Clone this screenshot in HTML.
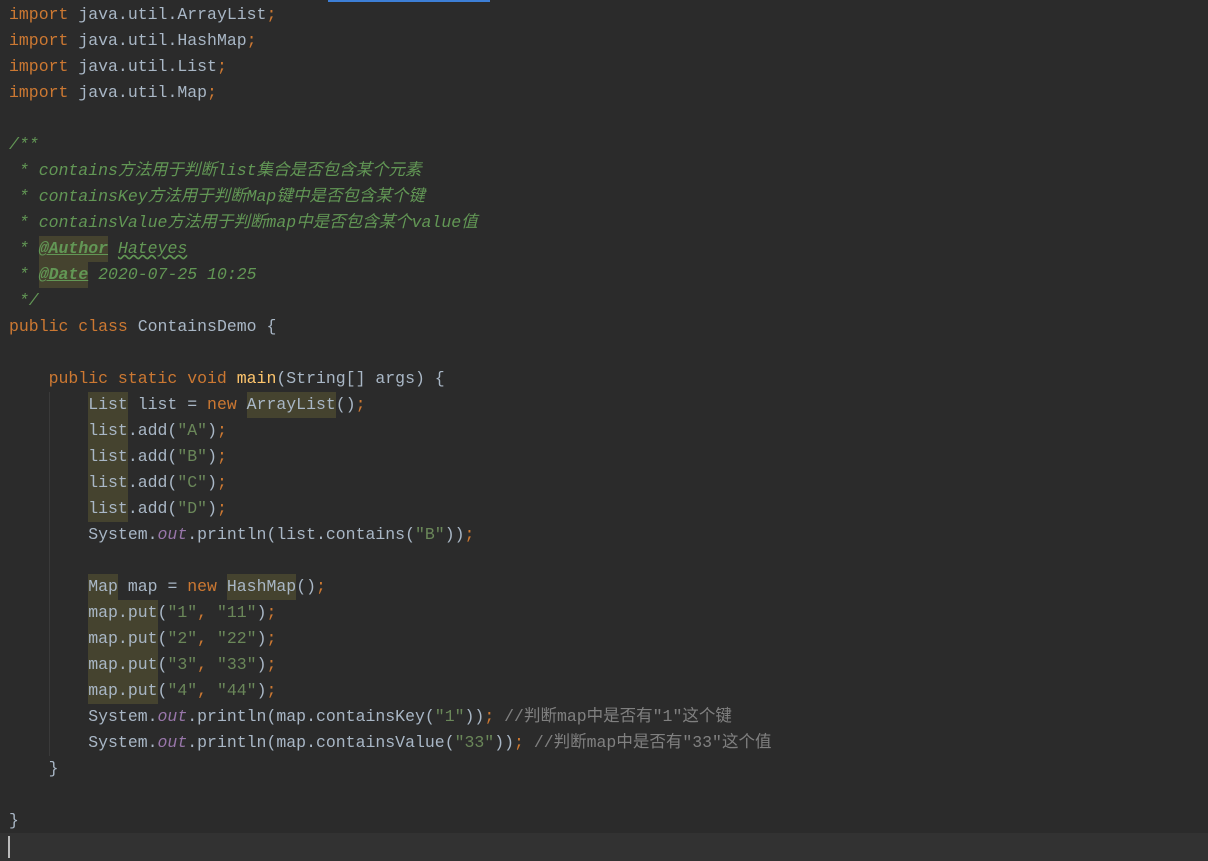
<!DOCTYPE html>
<html><head><meta charset="utf-8"><style>
body{margin:0;width:1208px;height:861px;background:#2b2b2b;overflow:hidden;position:relative;font-family:"Liberation Mono","Noto Sans CJK SC",monospace;font-size:16.5px;color:#a9b7c6}
.l{position:absolute;left:9px;height:26px;line-height:26px;white-space:pre;margin-top:1px}
.k{color:#cc7832}.s{color:#6a8759}.o{color:#9876aa;font-style:italic}.m{color:#ffc66d}
.c{color:#629755;font-style:italic}.g{color:#808080}
.h{background:#45432f;display:inline-block;height:26px}
.t{font-weight:bold;text-decoration:underline;background:#45432f;display:inline-block;height:26px}
.w{text-decoration:underline wavy #629755}
</style></head><body>
<div style="position:absolute;left:328px;top:0;width:162px;height:2px;background:#3d7fd6"></div>
<div style="position:absolute;left:0;top:833px;width:1208px;height:28px;background:#323232"></div>
<div style="position:absolute;left:8px;top:836px;width:2px;height:22px;background:#bbb"></div>
<div style="position:absolute;left:49px;top:392px;width:1px;height:364px;background:#3a3a3a"></div>
<div class="l" style="top:1px"><span class="k">import</span> java.util.ArrayList<span class="k">;</span></div>
<div class="l" style="top:27px"><span class="k">import</span> java.util.HashMap<span class="k">;</span></div>
<div class="l" style="top:53px"><span class="k">import</span> java.util.List<span class="k">;</span></div>
<div class="l" style="top:79px"><span class="k">import</span> java.util.Map<span class="k">;</span></div>
<div class="l c" style="top:131px">/**</div>
<div class="l c" style="top:157px"> * contains方法用于判断list集合是否包含某个元素</div>
<div class="l c" style="top:183px"> * containsKey方法用于判断Map键中是否包含某个键</div>
<div class="l c" style="top:209px"> * containsValue方法用于判断map中是否包含某个value值</div>
<div class="l c" style="top:235px"> * <span class="t">@Author</span> <span class="w">Hateyes</span></div>
<div class="l c" style="top:261px"> * <span class="t">@Date</span> 2020-07-25 10:25</div>
<div class="l c" style="top:287px"> */</div>
<div class="l" style="top:313px"><span class="k">public class</span> ContainsDemo {</div>
<div class="l" style="top:365px">    <span class="k">public static void</span> <span class="m">main</span>(String[] args) {</div>
<div class="l" style="top:391px">        <span class="h">List</span> list = <span class="k">new</span> <span class="h">ArrayList</span>()<span class="k">;</span></div>
<div class="l" style="top:417px">        <span class="h">list</span>.add(<span class="s">"A"</span>)<span class="k">;</span></div>
<div class="l" style="top:443px">        <span class="h">list</span>.add(<span class="s">"B"</span>)<span class="k">;</span></div>
<div class="l" style="top:469px">        <span class="h">list</span>.add(<span class="s">"C"</span>)<span class="k">;</span></div>
<div class="l" style="top:495px">        <span class="h">list</span>.add(<span class="s">"D"</span>)<span class="k">;</span></div>
<div class="l" style="top:521px">        System.<span class="o">out</span>.println(list.contains(<span class="s">"B"</span>))<span class="k">;</span></div>
<div class="l" style="top:573px">        <span class="h">Map</span> map = <span class="k">new</span> <span class="h">HashMap</span>()<span class="k">;</span></div>
<div class="l" style="top:599px">        <span class="h">map.put</span>(<span class="s">"1"</span><span class="k">,</span> <span class="s">"11"</span>)<span class="k">;</span></div>
<div class="l" style="top:625px">        <span class="h">map.put</span>(<span class="s">"2"</span><span class="k">,</span> <span class="s">"22"</span>)<span class="k">;</span></div>
<div class="l" style="top:651px">        <span class="h">map.put</span>(<span class="s">"3"</span><span class="k">,</span> <span class="s">"33"</span>)<span class="k">;</span></div>
<div class="l" style="top:677px">        <span class="h">map.put</span>(<span class="s">"4"</span><span class="k">,</span> <span class="s">"44"</span>)<span class="k">;</span></div>
<div class="l" style="top:703px">        System.<span class="o">out</span>.println(map.containsKey(<span class="s">"1"</span>))<span class="k">;</span> <span class="g">//判断map中是否有"1"这个键</span></div>
<div class="l" style="top:729px">        System.<span class="o">out</span>.println(map.containsValue(<span class="s">"33"</span>))<span class="k">;</span> <span class="g">//判断map中是否有"33"这个值</span></div>
<div class="l" style="top:755px">    }</div>
<div class="l" style="top:807px">}</div>
</body></html>
